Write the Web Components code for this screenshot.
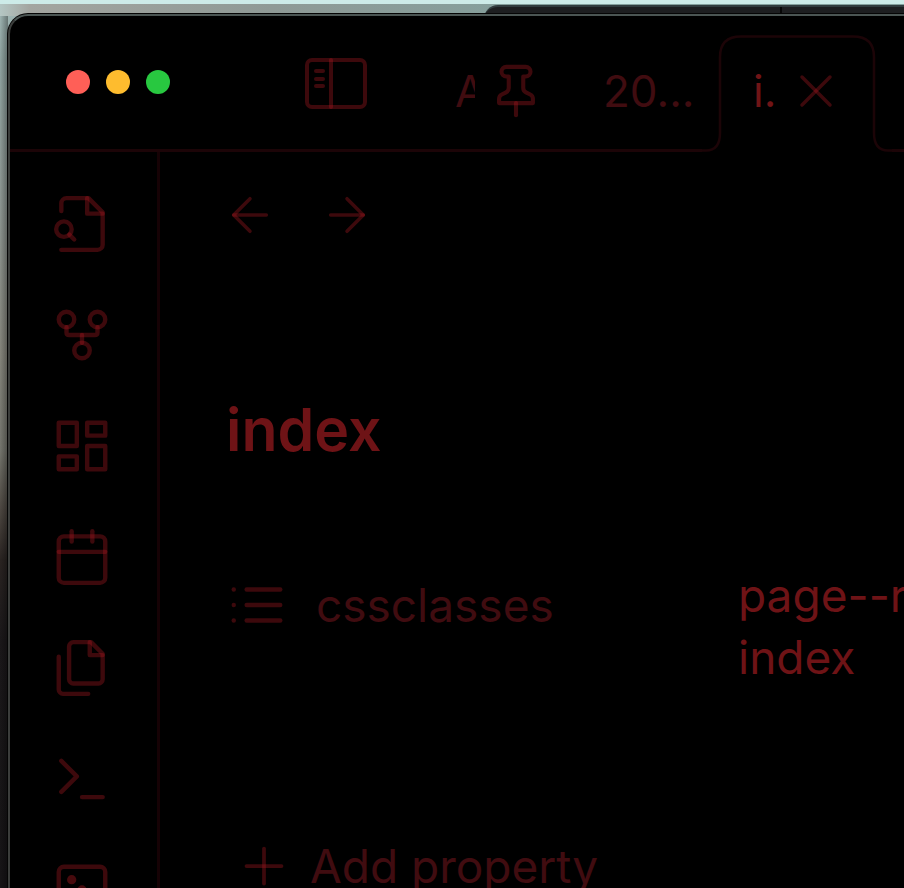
<!DOCTYPE html>
<html lang="en">
<head>
<meta charset="utf-8">
<meta name="viewport" content="width=device-width, initial-scale=1">
<title>index</title>
<style>
  html, body { height: 100%; }
  body {
    margin: 0;
    overflow: hidden;
    font-family: Inter, "Liberation Sans", sans-serif;
    --stroke: rgba(170, 24, 32, 0.36);
    --line: #1c0407;
    --text: #6e1316;
    --muted: #400c10;
    color: var(--text);
    background: #161315;
  }
</style>
</head>
<body>
<desk-top>
  <app-window>
    <window-header slot="header"></window-header>
    <ribbon-bar slot="ribbon">
      <icon-button icon="file-search" label="Quick switcher"></icon-button>
      <icon-button icon="fork" label="Graph view"></icon-button>
      <icon-button icon="dashboard" label="Canvas"></icon-button>
      <icon-button icon="calendar" label="Daily note"></icon-button>
      <icon-button icon="files" label="Templates"></icon-button>
      <icon-button icon="terminal" label="Command palette"></icon-button>
      <icon-button icon="dice" label="Random note"></icon-button>
    </ribbon-bar>
    <note-view heading="index">
      <property-row name="cssclasses"><span>page--r</span><span>index</span></property-row>
    </note-view>
  </app-window>
</desk-top>

<script>
  const icons = {
    'file-search': '<path d="M4 22h14a2 2 0 0 0 2-2V7.5L14.5 2H6a2 2 0 0 0-2 2v3"/><path d="M14 2v6h6"/><circle cx="5" cy="14" r="3"/><path d="m9 18-1.9-1.9"/>',
    fork: '<circle cx="12" cy="18" r="3"/><circle cx="6" cy="6" r="3"/><circle cx="18" cy="6" r="3"/><path d="M18 9v2c0 .6-.4 1-1 1H7c-.6 0-1-.4-1-1V9"/><path d="M12 12v3"/>',
    dashboard: '<rect x="3" y="3" width="7" height="9"/><rect x="14" y="3" width="7" height="5"/><rect x="14" y="12" width="7" height="9"/><rect x="3" y="16" width="7" height="5"/>',
    calendar: '<rect x="3" y="4" width="18" height="18" rx="2"/><path d="M16 2v4"/><path d="M8 2v4"/><path d="M3 10h18"/>',
    files: '<path d="M15.5 2H8.6c-.4 0-.8.2-1.1.5-.3.3-.5.7-.5 1.1v12.8c0 .4.2.8.5 1.1.3.3.7.5 1.1.5h9.8c.4 0 .8-.2 1.1-.5.3-.3.5-.7.5-1.1V6.5L15.5 2z"/><path d="M3 7.6v12.8c0 .4.2.8.5 1.1.3.3.7.5 1.1.5h9.8"/><path d="M15 2v5h5"/>',
    terminal: '<path d="m4 17 6-6-6-6"/><path d="M12 19h8"/>',
    dice: '<rect x="3" y="3" width="18" height="18" rx="2"/><g stroke="none" fill="rgba(170,24,32,.42)"><circle cx="8" cy="8" r="1.8"/><circle cx="12" cy="12" r="1.8"/><circle cx="16" cy="16" r="1.8"/></g>',
    left: '<path d="M19 12H5"/><path d="m12 19-7-7 7-7"/>',
    right: '<path d="M5 12h14"/><path d="m12 5 7 7-7 7"/>',
    pin: '<path d="M12 17v5"/><path d="M5 17h14v-1.76a2 2 0 0 0-1.11-1.79l-1.78-.9A2 2 0 0 1 15 10.76V6h1a2 2 0 0 0 0-4H8a2 2 0 0 0 0 4h1v4.76a2 2 0 0 1-1.11 1.79l-1.78.9A2 2 0 0 0 5 15.24Z"/>',
    close: '<path d="M18 6 6 18"/><path d="m6 6 12 12"/>',
    list: '<path d="M8 6h13"/><path d="M8 12h13"/><path d="M8 18h13"/><path d="M3 6h.01"/><path d="M3 12h.01"/><path d="M3 18h.01"/>',
    plus: '<path d="M5 12h14"/><path d="M12 5v14"/>'
  };

  const define = (name, html, setup) => customElements.define(name, class extends HTMLElement {
    connectedCallback() {
      if (this.shadowRoot) return;
      const root = this.attachShadow({ mode: 'open' });
      const template = document.createElement('template');
      template.innerHTML = html;
      root.append(template.content.cloneNode(true));
      if (setup) setup(this, root);
    }
  });

  define('line-icon', `
    <style>
      :host { display: block; width: var(--icon-size, 62px); height: var(--icon-size, 62px); flex: none; }
      svg { display: block; width: 100%; height: 100%; fill: none; stroke: var(--stroke);
            stroke-width: var(--icon-stroke, 1.7); stroke-linecap: round; stroke-linejoin: round; }
    </style>
    <svg viewBox="0 0 24 24" aria-hidden="true"></svg>`,
    (host, root) => { root.querySelector('svg').innerHTML = icons[host.getAttribute('name')]; });

  define('icon-button', `
    <style>
      :host { display: block; flex: none; }
      button { display: block; margin: 0; padding: 0; border: 0; background: none; color: inherit; cursor: pointer; }
    </style>
    <button type="button"></button>`,
    (host, root) => {
      const button = root.querySelector('button');
      button.setAttribute('aria-label', host.getAttribute('label'));
      const icon = document.createElement('line-icon');
      icon.setAttribute('name', host.getAttribute('icon'));
      button.append(icon);
    });

  define('desk-top', `
    <style>
      :host {
        display: block; position: relative; box-sizing: border-box; height: 100%; padding: 14px 0 0 8px; overflow: hidden;
        background:
          linear-gradient(#cdebe8, #cdebe8) 0 0 / 100% 4px no-repeat,
          linear-gradient(90deg, #b4c6c3, #a3a5a0 30px, #8f9a96 30%, #84a09d 60%) 0 4px / 100% 12px no-repeat,
          linear-gradient(90deg, transparent, rgba(0, 0, 0, .35)) 0 0 / 8px 100% no-repeat,
          linear-gradient(#a3bab8 0, #8fa3a0 60px, #8d9692 200px, #85857c 350px, #74756d 450px, #4d4741 510px, #2a2422 560px, #1b181a 640px, #161416 100%);
      }
      .behind { position: absolute; top: 5px; left: 484px; right: 0; height: 16px; display: flex;
                background: #1d1e20; border-top: 2px solid #313c3e; border-radius: 14px 0 0 0; }
      .behind i { width: 296px; border-right: 2px solid #060606; }
    </style>
    <div class="behind"><i></i></div>
    <slot></slot>`);

  define('app-window', `
    <style>
      :host { display: flex; flex-direction: column; position: relative; box-sizing: border-box; height: 100%;
              background: #000; border: solid #4b5553; border-width: 2px 0 0 2px; border-left-color: #3b3d3b;
              border-radius: 20px 0 0 0; box-shadow: 0 0 0 1px #050505; overflow: hidden; }
      .body { display: flex; flex: 1; min-height: 0; }
      slot[name=ribbon] { display: contents; }
      ::slotted(note-view) { flex: 1; }
    </style>
    <slot name="header"></slot>
    <div class="body"><slot name="ribbon"></slot><slot></slot></div>`);

  define('window-controls', `
    <style>
      :host { display: flex; gap: 16px; }
      button { width: 24px; height: 24px; padding: 0; border: 0; border-radius: 50%; }
      .close { background: #ff5f57; } .min { background: #febc2e; } .max { background: #28c840; }
    </style>
    <button class="close" type="button" aria-label="Close"></button>
    <button class="min" type="button" aria-label="Minimise"></button>
    <button class="max" type="button" aria-label="Zoom"></button>`);

  define('sidebar-toggle', `
    <style>
      :host { display: block; flex: none; }
      button { display: block; padding: 0; border: 0; background: none; }
      svg { display: block; width: 62px; height: 52px; fill: none; stroke: var(--stroke); stroke-width: 4; stroke-linecap: round; }
    </style>
    <button type="button" aria-label="Toggle left sidebar">
      <svg viewBox="0 0 62 52"><rect x="2" y="3" width="58" height="47" rx="5"/><path d="M26 3v47"/><path d="M11 14h7"/><path d="M11 22h7"/><path d="M11 29h7"/></svg>
    </button>`);

  define('tab-item', `
    <style>
      :host { display: flex; position: relative; isolation: isolate; box-sizing: border-box; flex: none; width: 148px; height: 114px;
              padding: 0 32px 2px; align-items: center; gap: 12px; font-size: 44px; line-height: 56px; color: var(--muted);
              --icon-size: 58px; }
      .title { overflow: hidden; white-space: nowrap; flex: none; padding: 0; border: 0; background: none; font: inherit; color: inherit; }
      .shape { display: none; }
      :host([kind=pinned]) .title { width: 20px; text-align: left; }
      :host([kind=active]) { width: 156px; height: 117px; margin-bottom: -3px; padding: 0 30px 5px 34px; color: #701416; gap: 12px;
              --icon-size: 56px; --icon-stroke: 1.5; }
      :host([kind=active]) .shape { display: block; position: absolute; z-index: -1; left: -17px; top: 0; width: 190px; height: 117px; }
    </style>
    <svg class="shape" viewBox="0 0 190 117" aria-hidden="true">
      <path fill="#000" d="M0 117V114H4Q18 114 18 98V22Q18 1 39 1H151Q172 1 172 22V98Q172 114 186 114H190V117Z"/>
      <path fill="none" stroke="#1c0407" stroke-width="2.5" d="M0 115.500H4Q18 115.500 18 98V22Q18 1.500 39 1.500H151Q172 1.500 172 22V98Q172 115.500 186 115.500H190"/>
    </svg>
    <button class="title" type="button"><slot></slot></button><slot name="icon"></slot>`);

  define('window-header', `
    <style>
      :host { display: flex; flex: none; align-items: center; height: 133px; padding-left: 56px; border-bottom: 3px solid var(--line); }
      window-controls { padding-bottom: 1px; }
      sidebar-toggle { margin-left: 135px; }
      nav { display: flex; align-self: flex-end; align-items: flex-end; margin-left: 56px; }
    </style>
    <window-controls></window-controls>
    <sidebar-toggle></sidebar-toggle>
    <nav aria-label="Tabs">
      <tab-item kind="pinned">A<line-icon slot="icon" name="pin"></line-icon></tab-item>
      <tab-item>20...</tab-item>
      <tab-item kind="active">i.<icon-button slot="icon" icon="close" label="Close tab"></icon-button></tab-item>
    </nav>`);

  define('ribbon-bar', `
    <style>
      :host { display: flex; flex: none; flex-direction: column; gap: 49px; box-sizing: border-box; width: 150px;
              padding: 41px 0 0 41px; border-right: 3px solid #160205; overflow: hidden; }
    </style>
    <slot></slot>`);

  define('property-row', `
    <style>
      :host { display: grid; grid-template-columns: 512px 1fr; font-size: 46px; line-height: 62px; }
      .key { display: flex; align-items: center; gap: 28px; height: 62px; color: var(--muted); padding-top: 10px; }
      .value { display: flex; flex-direction: column; align-items: flex-start; white-space: nowrap; min-width: 0; overflow: hidden; }
    </style>
    <div class="key"><line-icon name="list"></line-icon><span></span></div>
    <div class="value"><slot></slot></div>`,
    (host, root) => { root.querySelector('.key span').textContent = host.getAttribute('name'); });

  define('note-view', `
    <style>
      :host { display: block; min-width: 0; overflow: hidden; }
      nav { display: flex; gap: 41px; padding: 35px 0 0 62px; --icon-size: 56px; --icon-stroke: 1.5; }
      main { padding: 147px 0 0 66px; }
      h1 { margin: 0 0 94px; font-size: 59px; line-height: 80px; font-weight: 600; }
      .add { display: flex; align-items: center; gap: 16px; margin: 147px 0 0 8px; padding: 0; border: 0; background: none;
             font: inherit; font-size: 46px; line-height: 62px; color: var(--muted); --icon-size: 60px; --icon-stroke: 1.5; }
    </style>
    <nav aria-label="History">
      <icon-button icon="left" label="Back"></icon-button>
      <icon-button icon="right" label="Forward"></icon-button>
    </nav>
    <main>
      <h1></h1>
      <slot></slot>
      <button class="add" type="button"><line-icon name="plus"></line-icon>Add property</button>
    </main>`,
    (host, root) => { root.querySelector('h1').textContent = host.getAttribute('heading'); });
</script>
</body>
</html>
